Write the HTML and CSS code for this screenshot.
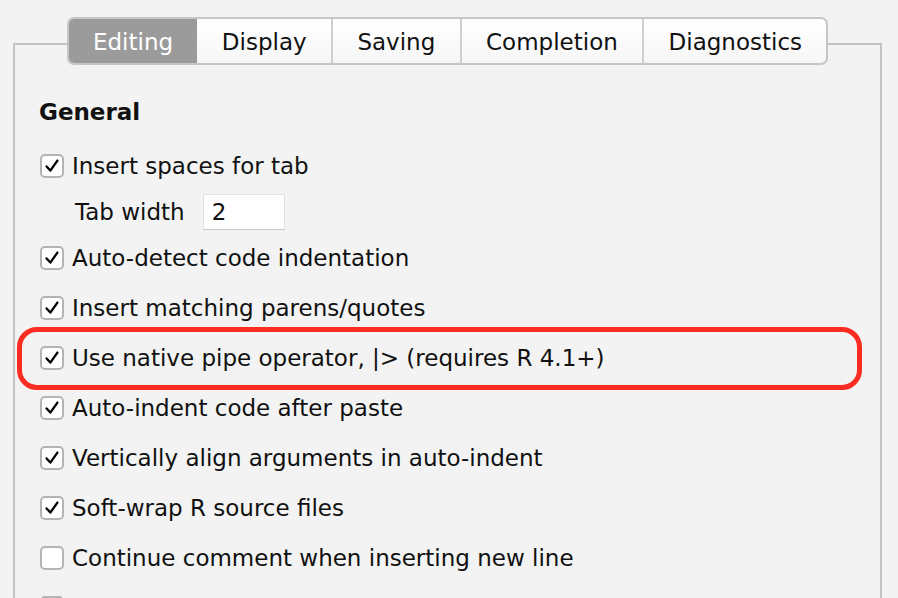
FILE: index.html
```html
<!DOCTYPE html>
<html>
<head>
<meta charset="utf-8">
<link rel="stylesheet" href="styles.css">
</head>
<body>
<div class="panel">
  <div class="tabs">
    <div class="tab selected">Editing</div>
    <div class="tab">Display</div>
    <div class="tab">Saving</div>
    <div class="tab">Completion</div>
    <div class="tab">Diagnostics</div>
  </div>
  <div class="content">
    <div class="heading">General</div>
    <div class="row"><span class="cb checked"><svg viewBox="0 0 24 24"><path d="M5.5 12.5 L10 17.5 L18.5 5.5"/></svg></span><span>Insert spaces for tab</span></div>
    <div class="row sub"><span>Tab width</span><span class="input">2</span></div>
    <div class="row"><span class="cb checked"><svg viewBox="0 0 24 24"><path d="M5.5 12.5 L10 17.5 L18.5 5.5"/></svg></span><span>Auto-detect code indentation</span></div>
    <div class="row"><span class="cb checked"><svg viewBox="0 0 24 24"><path d="M5.5 12.5 L10 17.5 L18.5 5.5"/></svg></span><span>Insert matching parens/quotes</span></div>
    <div class="row highlight"><span class="cb checked"><svg viewBox="0 0 24 24"><path d="M5.5 12.5 L10 17.5 L18.5 5.5"/></svg></span><span>Use native pipe operator, |&gt; (requires R 4.1+)</span></div>
    <div class="row"><span class="cb checked"><svg viewBox="0 0 24 24"><path d="M5.5 12.5 L10 17.5 L18.5 5.5"/></svg></span><span>Auto-indent code after paste</span></div>
    <div class="row"><span class="cb checked"><svg viewBox="0 0 24 24"><path d="M5.5 12.5 L10 17.5 L18.5 5.5"/></svg></span><span>Vertically align arguments in auto-indent</span></div>
    <div class="row"><span class="cb checked"><svg viewBox="0 0 24 24"><path d="M5.5 12.5 L10 17.5 L18.5 5.5"/></svg></span><span>Soft-wrap R source files</span></div>
    <div class="row"><span class="cb"></span><span>Continue comment when inserting new line</span></div>
    <div class="row"><span class="cb"></span><span>Enable hyperlink highlighting in editor</span></div>
  </div>
</div>
</body>
</html>
```
FILE: styles.css
```css
html, body {
  margin: 0;
  padding: 0;
  background: #f2f3f2;
  height: 598px;
  overflow: hidden;
}
body {
  font-family: "DejaVu Sans", "Noto Sans", sans-serif;
  font-size: 23px;
  color: #111;
}
.panel {
  margin: 43px 0 0 13px;
  width: 865px;
  height: 700px;
  border: 2px solid #c3c3c3;
  border-bottom: none;
}
.tabs {
  display: flex;
  width: fit-content;
  margin: -28px auto 0;
  height: 44px;
  border: 2px solid #c6c6c6;
  border-radius: 7px;
  background: linear-gradient(#ffffff, #f6f6f6);
  overflow: hidden;
}
.tab {
  display: flex;
  align-items: center;
  padding: 1px 24.4px 0;
  border-left: 2px solid #cfcfcf;
  color: #111;
}
.tab:first-child { border-left: none; }
.tab.selected {
  background: #9b9b9b;
  color: #fff;
  border-left: none;
}
.tab.selected + .tab { border-left: none; }
.content {
  padding: 32px 0 0 25px;
  display: flex;
  flex-direction: column;
}
.heading {
  font-weight: bold;
  height: 30px;
  line-height: 30px;
  margin-bottom: 14px;
  margin-left: -1px;
}
.row {
  display: flex;
  align-items: center;
  height: 50px;
  gap: 8px;
  white-space: nowrap;
  position: relative;
}
.row.sub {
  height: 42px;
  padding-left: 35px;
  gap: 18px;
}
.cb {
  width: 20px;
  height: 20px;
  border: 2px solid #b4b4b4;
  border-radius: 5px;
  background: #fff;
  flex: none;
  display: flex;
  align-items: center;
  justify-content: center;
}
.cb svg {
  width: 20px;
  height: 20px;
}
.cb svg path {
  fill: none;
  stroke: #000;
  stroke-width: 2.8;
  stroke-linecap: round;
  stroke-linejoin: round;
}
.input {
  width: 72px;
  height: 34px;
  line-height: 34px;
  padding-left: 8px;
  background: #fff;
  border: 1px solid #e2e2e2;
  border-bottom-color: #c8c8c8;
}
.highlight::before {
  content: "";
  position: absolute;
  left: -23px;
  top: -6px;
  width: 835px;
  height: 53px;
  border: 5px solid #fb2d23;
  border-radius: 20px;
}
```
